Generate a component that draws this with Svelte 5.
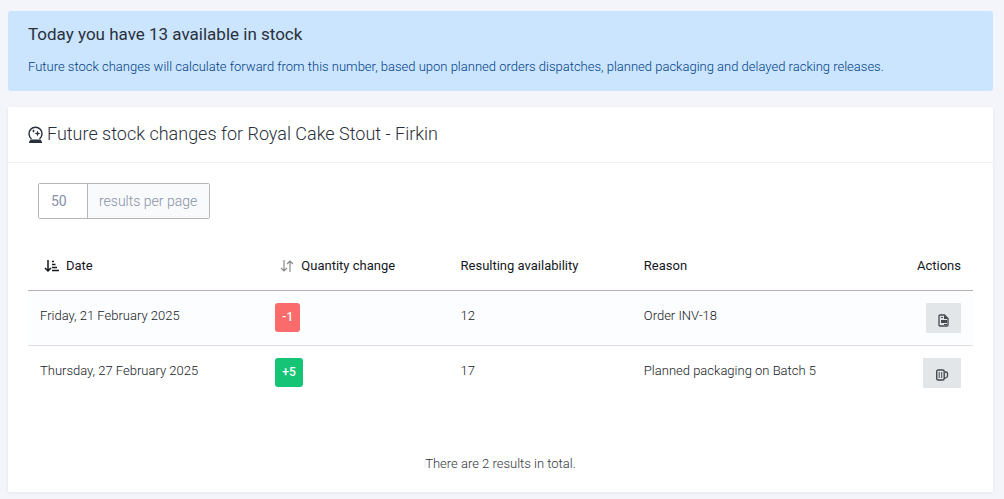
<script>
  let product = 'Royal Cake Stout - Firkin';
  let available = 13;
  let perPage = 50;

  let changes = [
    { date: 'Friday, 21 February 2025', change: -1, resulting: 12, reason: 'Order INV-18', type: 'order' },
    { date: 'Thursday, 27 February 2025', change: 5, resulting: 17, reason: 'Planned packaging on Batch 5', type: 'packaging' }
  ];
</script>

<main>
  <section class="alert">
    <h2>Today you have {available} available in stock</h2>
    <p>Future stock changes will calculate forward from this number, based upon planned orders dispatches, planned packaging and delayed racking releases.</p>
  </section>

  <section class="card">
    <header>
      <svg class="ball" viewBox="0 0 15 17" aria-hidden="true">
        <path d="M3.500 12.800A6.500 6.500 0 1 1 11.500 12.800" fill="none" stroke="currentColor" stroke-width="1.500" />
        <path d="M2.500 13.500h10L14 16v1H1v-1z" fill="currentColor" />
        <path d="M9.500 4.500l.8 2.200 2.200.8-2.200.8-.8 2.200-.8-2.200-2.200-.8 2.200-.8zM5.500 3l.5 1.500 1.500.5-1.500.5L5.500 7 5 5.500 3.500 5 5 4.500z" fill="currentColor" />
      </svg>
      <h1>Future stock changes for {product}</h1>
    </header>

    <div class="card-body">
      <div class="per-page">
        <input id="per-page" type="text" bind:value={perPage} />
        <label for="per-page">results per page</label>
      </div>

      <table>
        <thead>
          <tr>
            <th class="date">
              <button class="sort active">
                <svg viewBox="0 0 16 14" aria-hidden="true">
                  <path d="M4 1v11M1 9l3 3 3-3M8 2.500h2M8 5.500h3.500M8 8.500h5M8 11.500h7" />
                </svg>
                Date
              </button>
            </th>
            <th class="change">
              <button class="sort">
                <svg viewBox="0 0 16 14" aria-hidden="true">
                  <path d="M5 1v11M2 9l3 3 3-3M11 13V2M8 5l3-3 3 3" />
                </svg>
                Quantity change
              </button>
            </th>
            <th class="resulting">Resulting availability</th>
            <th>Reason</th>
            <th class="actions">Actions</th>
          </tr>
        </thead>
        <tbody>
          {#each changes as row}
            <tr>
              <td>{row.date}</td>
              <td>
                <span class="badge" class:up={row.change > 0}>{row.change > 0 ? '+' : ''}{row.change}</span>
              </td>
              <td>{row.resulting}</td>
              <td>{row.reason}</td>
              <td class="actions">
                {#if row.type === 'order'}
                  <button class="action" aria-label="View order">
                    <svg width="11" height="13" viewBox="0 0 11 13" aria-hidden="true">
                      <path d="M2 1h4.500L10 4.500V11q0 1-1 1H2q-1 0-1-1V2q0-1 1-1z" fill="none" stroke="currentColor" stroke-width="1.300" />
                      <path d="M6 1v4h4zM3 6h6v3H3zM6 10h3v1H6zM3 3h2v1H3z" fill="currentColor" />
                    </svg>
                  </button>
                {:else}
                  <button class="action" aria-label="View batch">
                    <svg width="14" height="12" viewBox="0 0 14 12" aria-hidden="true">
                      <rect x="1.700" y="1" width="7.500" height="10" rx="1.500" fill="none" stroke="currentColor" stroke-width="1.400" />
                      <path d="M4.200 3v6M6.700 3v6" fill="none" stroke="currentColor" />
                      <path d="M9.500 3h1.500q1.500 0 1.500 1.500V7q0 1-1 1.500l-2 .8" fill="none" stroke="currentColor" stroke-width="1.300" />
                    </svg>
                  </button>
                {/if}
              </td>
            </tr>
          {/each}
        </tbody>
      </table>

      <p class="total">There are {changes.length} results in total.</p>
    </div>
  </section>
</main>

<style>
  :global(body) {
    background: #f4f5fa;
    color: #15181d;
    font-family: Roboto, sans-serif;
    font-size: 13px;
    font-weight: 300;
    line-height: 20px;
  }

  main {
    display: flex;
    flex-direction: column;
    gap: 16px;
    padding: 11px 11px 8px 8px;
  }

  h1,
  h2,
  p {
    margin: 0;
  }

  .alert {
    display: flex;
    flex-direction: column;
    gap: 12px;
    padding: 12px 20px 14px;
    border-radius: 3px;
    background: #cbe5ff;
    color: #004085;
  }

  h1,
  h2 {
    line-height: 22px;
    color: #2a303b;
  }

  h1 {
    font-size: 18px;
    font-weight: 300;
  }

  h2 {
    font-size: 17px;
    font-weight: 400;
  }

  .card {
    background: #fff;
    box-shadow: 0 1px 3px rgba(60, 70, 100, 0.08);
  }

  header {
    display: flex;
    align-items: center;
    gap: 4px;
    padding: 16px 20px 17px;
    border-bottom: 1px solid #eff1f5;
  }

  .ball {
    width: 15px;
    height: 17px;
    color: #2a303b;
  }

  .card-body {
    padding: 20px 20px 18px;
  }

  .per-page {
    display: flex;
    width: fit-content;
    margin-left: 10px;
    border: 1px solid #b5b5b5;
    border-radius: 2px;
    color: #8691a8;
    font-size: 14px;
    line-height: 34px;
  }

  .per-page input {
    box-sizing: border-box;
    width: 48px;
    height: 34px;
    padding: 0 12px;
    border: 0;
    background: #fff;
    color: inherit;
    font: inherit;
    font-weight: 400;
  }

  .per-page label {
    padding: 0 12px 0 11px;
    border-left: 1px solid #b5b5b5;
    background: #f9fafc;
  }

  table {
    width: 100%;
    margin-top: 20px;
    border-collapse: collapse;
    table-layout: fixed;
  }

  th,
  td {
    box-sizing: border-box;
    padding: 12px;
    text-align: left;
    vertical-align: top;
  }

  th {
    padding: 17px 12px 14px;
    border-bottom: 1px solid #b5b0b2;
    font-weight: 400;
  }

  td {
    line-height: 25px;
  }

  .date {
    width: 24.9%;
  }

  .change {
    width: 19.6%;
  }

  .resulting {
    width: 19.4%;
  }

  th.actions {
    width: 12%;
  }

  .actions {
    text-align: right;
  }

  .sort {
    display: flex;
    align-items: center;
    gap: 6px;
    padding: 0 0 0 4px;
    border: 0;
    background: none;
    color: inherit;
    font: inherit;
  }

  .sort svg {
    width: 16px;
    height: 14px;
    fill: none;
    stroke: #8b8b8b;
    stroke-width: 1.2;
  }

  .sort.active svg {
    stroke: #15181d;
    stroke-width: 1.5;
  }

  tbody tr {
    border-bottom: 1px solid #dcdfe3;
  }

  tbody tr:nth-child(odd) {
    background: #fcfdff;
  }

  tbody tr:last-child {
    border-bottom: 0;
  }

  .badge {
    display: inline-block;
    padding: 0 7px;
    border-radius: 3px;
    background: #fa6b6b;
    color: #fff;
    font-size: 12px;
    font-weight: 500;
    line-height: 29px;
    vertical-align: top;
  }

  .badge.up {
    background: #16c476;
  }

  .action {
    height: 30px;
    padding: 4px 12px 0;
    border: 0;
    border-radius: 1px;
    background: #e2e6e9;
    color: #454a50;
    vertical-align: top;
  }

  .action svg {
    display: block;
  }

  .total {
    margin-top: 54px;
    color: #30353d;
    text-align: center;
  }
</style>
